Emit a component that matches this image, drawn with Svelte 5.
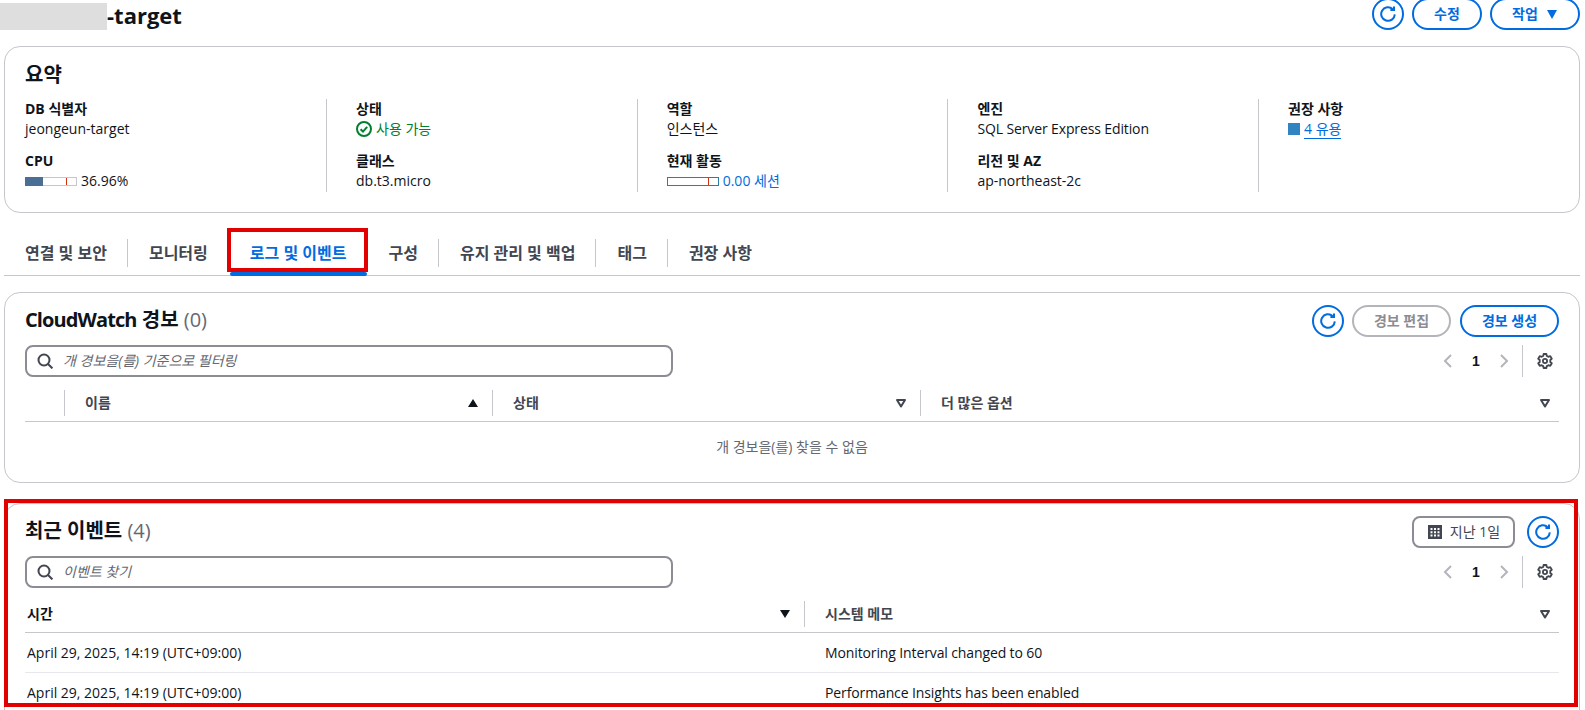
<script>
    const tabs = ["연결 및 보안", "모니터링", "로그 및 이벤트", "구성", "유지 관리 및 백업", "태그", "권장 사항"];
    const activeTab = 2;
    const events = [
        { time: "April 29, 2025, 14:19 (UTC+09:00)", note: "Monitoring Interval changed to 60" },
        { time: "April 29, 2025, 14:19 (UTC+09:00)", note: "Performance Insights has been enabled" },
    ];
</script>

{#snippet refresh()}
    <button class="btn round" aria-label="새로 고침">
        <svg viewBox="0 0 16 16" width="16" height="16" fill="none" stroke="currentColor" stroke-width="2">
            <path d="M14.8 8.4a6.8 6.8 0 1 1-2.2-5.4" />
            <path d="M14 0.4v3.6h-3.6" />
        </svg>
    </button>
{/snippet}

{#snippet search(text)}
    <div class="search">
        <svg viewBox="0 0 16 16" width="16" height="16" fill="none" stroke="#424650" stroke-width="2">
            <circle cx="7" cy="7" r="5.5" />
            <path d="M11 11l4.4 4.4" />
        </svg>
        <span>{text}</span>
    </div>
{/snippet}

{#snippet pager()}
    <div class="pager">
        <svg viewBox="0 0 16 16" width="16" height="16" fill="none" stroke="#b4b4bb" stroke-width="2">
            <path d="M11 2L5 8l6 6" />
        </svg>
        <b>1</b>
        <svg viewBox="0 0 16 16" width="16" height="16" fill="none" stroke="#b4b4bb" stroke-width="2">
            <path d="M5 2l6 6-6 6" />
        </svg>
        <i class="pager-sep"></i>
        <svg class="gear" viewBox="0 0 16 16" width="16" height="16" fill="none" stroke="#424650" stroke-width="1.8" stroke-linejoin="round">
            <circle cx="8" cy="8" r="2.1" />
            <path d="M13.3 8c0-.4 0-.7-.1-1l1.6-1.3-1.5-2.6-2 .7c-.5-.4-1-.7-1.6-.9L9.4 1H6.6l-.3 1.9c-.6.2-1.1.5-1.6.9l-2-.7-1.5 2.6L2.8 7c-.1.3-.1.6-.1 1s0 .7.1 1l-1.6 1.3 1.5 2.6 2-.7c.5.4 1 .7 1.6.9l.3 1.9h2.8l.3-1.9c.6-.2 1.1-.5 1.6-.9l2 .7 1.5-2.6L13.2 9c.1-.3.1-.6.1-1z" />
        </svg>
    </div>
{/snippet}

{#snippet caret(filled)}
    <svg class="caret" viewBox="0 0 12 12" width="12" height="12">
        {#if filled === "up"}
            <path d="M6 2l5 8H1z" fill="#0f141a" />
        {:else if filled === "down"}
            <path d="M6 10L1 2h10z" fill="#0f141a" />
        {:else}
            <path d="M6 9.5L2 3h8z" fill="none" stroke="#424650" stroke-width="2" stroke-linejoin="round" />
        {/if}
    </svg>
{/snippet}

<div class="page">
    <header class="top">
        <h1><span class="redact"></span>-target</h1>
        <div class="actions">
            {@render refresh()}
            <button class="btn act-edit">수정</button>
            <button class="btn act-menu">
                작업
                <svg viewBox="0 0 12 12" width="12" height="12"><path d="M6 11L1 2h10z" fill="currentColor" /></svg>
            </button>
        </div>
    </header>

    <section class="card summary">
        <h2>요약</h2>
        <div class="cols">
            <div class="col">
                <div class="pair">
                    <div class="label">DB 식별자</div>
                    <div class="value">jeongeun-target</div>
                </div>
                <div class="pair">
                    <div class="label">CPU</div>
                    <div class="value meter">
                        <span class="bar"><span class="fill" style="width: 36.96%"></span><span class="tick"></span></span>
                        36.96%
                    </div>
                </div>
            </div>
            <div class="col">
                <div class="pair">
                    <div class="label">상태</div>
                    <div class="value status">
                        <svg viewBox="0 0 16 16" width="16" height="16" fill="none" stroke="#00802f" stroke-width="2">
                            <circle cx="8" cy="8" r="7" />
                            <path d="M4.6 8.2l2.4 2.4 4.2-4.8" />
                        </svg>
                        사용 가능
                    </div>
                </div>
                <div class="pair">
                    <div class="label">클래스</div>
                    <div class="value">db.t3.micro</div>
                </div>
            </div>
            <div class="col">
                <div class="pair">
                    <div class="label">역할</div>
                    <div class="value">인스턴스</div>
                </div>
                <div class="pair">
                    <div class="label">현재 활동</div>
                    <div class="value meter link">
                        <span class="bar session"><span class="tick"></span></span>
                        0.00 세션
                    </div>
                </div>
            </div>
            <div class="col">
                <div class="pair">
                    <div class="label">엔진</div>
                    <div class="value tight">SQL Server Express Edition</div>
                </div>
                <div class="pair">
                    <div class="label">리전 및 AZ</div>
                    <div class="value">ap-northeast-2c</div>
                </div>
            </div>
            <div class="col">
                <div class="pair">
                    <div class="label">권장 사항</div>
                    <div class="value rec"><i class="square"></i><a href="#rec">4 유용</a></div>
                </div>
            </div>
        </div>
    </section>

    <nav class="tabs">
        {#each tabs as tab, i}
            <div class="tab" class:active={i === activeTab} class:first={i === 0} class:nosep={i === activeTab || i === activeTab + 1}>
                {tab}
            </div>
        {/each}
        <div class="mark tab-mark"></div>
    </nav>

    <section class="card alarms">
        <div class="head">
            <h2><span class="narrow">CloudWatch</span> 경보 <span class="count">(0)</span></h2>
            <div class="actions">
                {@render refresh()}
                <button class="btn off alarm-btn">경보 편집</button>
                <button class="btn alarm-btn">경보 생성</button>
            </div>
        </div>
        <div class="tools">
            {@render search("개 경보을(를) 기준으로 필터링")}
            {@render pager()}
        </div>
        <div class="thead alarm-cols">
            <div class="th first"></div>
            <div class="th sep">이름 {@render caret("up")}</div>
            <div class="th sep">상태 {@render caret()}</div>
            <div class="th sep last">더 많은 옵션 {@render caret()}</div>
        </div>
        <p class="empty">개 경보을(를) 찾을 수 없음</p>
    </section>

    <section class="card events">
        <div class="head">
            <h2>최근 이벤트 <span class="count">(4)</span></h2>
            <div class="actions">
                <button class="btn range">
                    <svg viewBox="0 0 16 16" width="16" height="16">
                        <rect x="1" y="1" width="14" height="14" fill="#424650" />
                        <path d="M3.5 4h2v2h-2zM7 4h2v2H7zM10.5 4h2v2h-2zM3.5 7.2h2v2h-2zM7 7.2h2v2H7zM10.5 7.2h2v2h-2zM3.5 10.4h2v2h-2zM7 10.4h2v2H7zM10.5 10.4h2v2h-2z" fill="#fff" />
                    </svg>
                    지난 1일
                </button>
                {@render refresh()}
            </div>
        </div>
        <div class="tools">
            {@render search("이벤트 찾기")}
            {@render pager()}
        </div>
        <div class="thead event-cols">
            <div class="th flush">시간 {@render caret("down")}</div>
            <div class="th sep last">시스템 메모 {@render caret()}</div>
        </div>
        {#each events as ev}
            <div class="row event-cols">
                <div class="cell flush">{ev.time}</div>
                <div class="cell tight">{ev.note}</div>
            </div>
        {/each}
    </section>

    <div class="mark events-mark"></div>
</div>

<style>
    :global(body) {
        margin: 0;
        background: #fff;
        overflow: hidden;
    }

    .page {
        position: relative;
        box-sizing: border-box;
        width: 1585px;
        height: 710px;
        overflow: hidden;
        padding: 0 5px 0 4px;
        color: #0f141a;
        font-family: "Open Sans", "Noto Sans CJK KR", sans-serif;
        font-size: 14px;
        line-height: 20px;
    }

    h1,
    h2,
    p {
        margin: 0;
    }

    .top {
        display: flex;
        justify-content: space-between;
        margin: -2px 0 0 -4px;
        height: 32px;
    }

    h1 {
        display: flex;
        align-items: flex-start;
        margin-top: 3px;
        font-size: 22px;
        line-height: 28px;
        font-weight: 700;
    }

    .redact {
        display: block;
        width: 107px;
        height: 27px;
        margin-top: 2px;
        background: #dedede;
    }

    .actions {
        display: flex;
        gap: 8px;
    }

    .btn {
        box-sizing: border-box;
        height: 32px;
        padding: 0;
        border: 2px solid #006ce0;
        border-radius: 20px;
        background: #fff;
        color: #006ce0;
        font: 700 14px/20px "Open Sans", "Noto Sans CJK KR", sans-serif;
        display: flex;
        align-items: center;
        justify-content: center;
    }

    .round {
        width: 32px;
        border-radius: 50%;
    }

    .act-edit {
        width: 70px;
    }

    .act-menu {
        width: 90px;
        gap: 8px;
    }

    .alarm-btn {
        width: 99px;
    }

    .off {
        margin-right: 1px;
        border-color: #b4b4bb;
        color: #8c8c94;
    }

    .range {
        width: 103px;
        gap: 7px;
        margin-right: 4px;
        border-color: #8c8c94;
        border-radius: 8px;
        color: #424650;
        font-weight: 400;
    }

    .card {
        box-sizing: border-box;
        border: 1px solid #c6c6cd;
        border-radius: 16px;
        background: #fff;
        padding: 12px 20px 0;
    }

    .summary {
        margin-top: 16px;
        height: 167px;
        padding-top: 14px;
    }

    .summary h2 {
        font-size: 20px;
        line-height: 28px;
        font-weight: 700;
    }

    .cols {
        display: grid;
        grid-template-columns: 301px repeat(3, 310.7px) 1fr;
        margin-top: 10px;
    }

    .col {
        height: 93px;
        padding-left: 29px;
        border-left: 1px solid #c6c6cd;
    }

    .col:first-child {
        padding-left: 0;
        border-left: 0;
    }

    .pair + .pair {
        margin-top: 12px;
    }

    .label {
        font-weight: 700;
    }

    .value {
        display: flex;
        align-items: center;
        white-space: nowrap;
    }

    .tight {
        letter-spacing: -0.12px;
    }

    .status {
        gap: 4px;
        color: #00802f;
    }

    .meter {
        gap: 4px;
    }

    .link {
        color: #006ce0;
    }

    .bar {
        position: relative;
        box-sizing: border-box;
        display: block;
        width: 52px;
        height: 9px;
        border: 1px solid #c6c6cd;
    }

    .bar .fill {
        display: block;
        height: 100%;
        background: #4b6f94;
        margin: -1px 0 0 -1px;
        padding-bottom: 2px;
    }

    .bar .tick {
        position: absolute;
        left: 40px;
        top: 0;
        bottom: 0;
        width: 1px;
        background: #d13212;
    }

    .session {
        border-color: #2a7ea8;
    }

    .rec {
        gap: 4px;
    }

    .square {
        width: 12px;
        height: 12px;
        background: #3184c2;
    }

    .rec a {
        color: #006ce0;
        text-decoration: none;
        border-bottom: 1px solid #006ce0;
        line-height: 19px;
    }

    .tabs {
        position: relative;
        display: flex;
        align-items: flex-start;
        height: 36px;
        margin-top: 26px;
        margin-bottom: 16px;
        border-bottom: 1px solid #c6c6cd;
    }

    .tab {
        height: 28px;
        padding: 0 20px 0 21px;
        border-left: 1px solid #c6c6cd;
        color: #424650;
        font-size: 16px;
        font-weight: 700;
        line-height: 28px;
        white-space: nowrap;
    }

    .tab.first {
        border-left: 0;
    }

    .tab.nosep {
        border-left-color: transparent;
    }

    .tab.active {
        color: #006ce0;
    }

    .tab.active::after {
        content: "";
        display: block;
        height: 4px;
        margin: 5px -21px 0 -20px;
        border-radius: 2px;
        background: #006ce0;
    }

    .count {
        color: #656871;
        font-weight: 400;
    }

    .narrow {
        letter-spacing: -0.9px;
    }

    .head {
        display: flex;
        justify-content: space-between;
        align-items: center;
    }

    .head h2 {
        font-size: 20px;
        line-height: 30px;
        margin-bottom: 2px;
        font-weight: 700;
    }

    .tools {
        display: flex;
        justify-content: space-between;
        margin-top: 8px;
    }

    .search {
        box-sizing: border-box;
        width: 648px;
        height: 32px;
        padding: 0 10px;
        display: flex;
        align-items: center;
        gap: 10px;
        border: 2px solid #8c8c94;
        border-radius: 8px;
        color: #656871;
        font-style: italic;
    }

    .pager {
        display: flex;
        align-items: center;
    }

    .pager b {
        width: 40px;
        text-align: center;
        font-family: "Liberation Sans", sans-serif;
    }

    .pager-sep {
        display: block;
        width: 1px;
        height: 32px;
        margin: 0 14px 0 10px;
        background: #c6c6cd;
    }

    .gear {
        margin-right: 6px;
    }

    .thead {
        display: grid;
        height: 36px;
        margin-top: 8px;
        border-bottom: 1px solid #c6c6cd;
        align-items: center;
        color: #424650;
    }

    .alarm-cols {
        grid-template-columns: 39px 428px 428px 1fr;
    }

    .event-cols {
        display: grid;
        grid-template-columns: 779px 1fr;
    }

    .thead.event-cols {
        display: grid;
        height: 37px;
        margin-top: 7px;
    }

    .th {
        display: flex;
        align-items: center;
        justify-content: space-between;
        height: 26px;
        padding: 0 13px 0 20px;
        font-weight: 700;
    }

    .th.sep {
        border-left: 1px solid #c6c6cd;
    }

    .th.last {
        padding-right: 8px;
    }

    .th.first {
        padding: 0;
    }

    .th.flush {
        padding-left: 2px;
        color: #0f141a;
    }

    .empty {
        padding-top: 15px;
        text-align: center;
        color: #656871;
    }

    .alarms {
        height: 191px;
    }

    .events {
        margin-top: 20px;
        height: 260px;
    }

    .row {
        height: 39px;
        border-bottom: 1px solid #e8e8ec;
        align-items: center;
    }

    .cell {
        padding-left: 21px;
    }

    .cell.flush {
        padding-left: 2px;
    }

    /* red annotation boxes drawn over the screenshot */
    .mark {
        position: absolute;
        box-sizing: border-box;
        border: 4px solid #e30000;
        pointer-events: none;
    }

    .tab-mark {
        left: 223px;
        top: -11px;
        width: 141px;
        height: 44px;
    }

    .events-mark {
        left: 4px;
        top: 499px;
        width: 1574px;
        height: 208px;
    }
</style>
